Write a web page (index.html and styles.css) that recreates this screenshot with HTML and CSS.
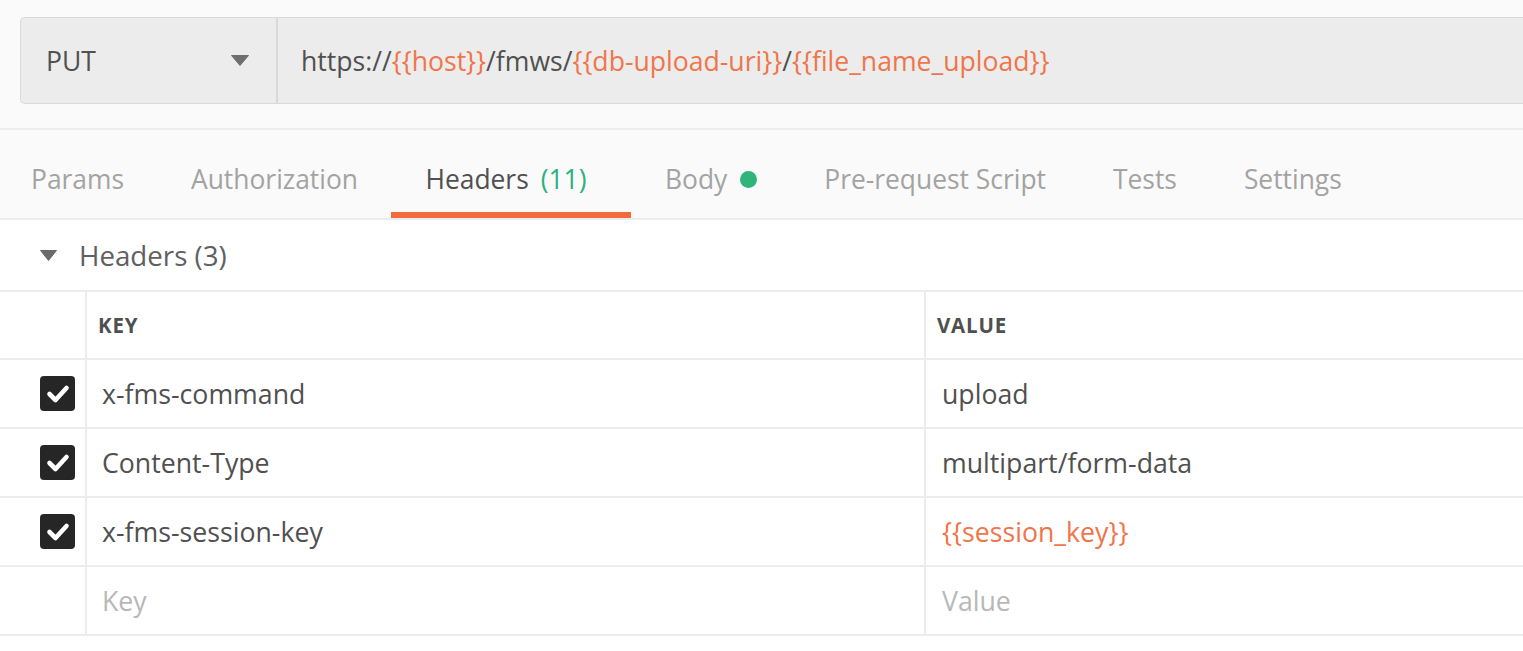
FILE: index.html
```html
<!DOCTYPE html>
<html>
<head>
<meta charset="utf-8">
<link rel="stylesheet" href="styles.css">
</head>
<body>
<div class="top">
  <div class="urlbar">
    <div class="method">
      <span class="method-name">PUT</span>
      <svg class="caret" width="18" height="11" viewBox="0 0 18 11"><path d="M0.5 0.5 L17.5 0.5 L9 10.5 Z" fill="#6e6e6e" stroke="#6e6e6e" stroke-width="1" stroke-linejoin="round"/></svg>
    </div>
    <div class="url">https://<span class="var">{{host}}</span>/fmws/<span class="var">{{db-upload-uri}}</span>/<span class="var">{{file_name_upload}}</span></div>
  </div>
</div>
<div class="tabs">
  <div class="tab">Params</div>
  <div class="tab">Authorization</div>
  <div class="tab active">Headers <span class="count">(11)</span></div>
  <div class="tab">Body <span class="dot"></span></div>
  <div class="tab">Pre-request Script</div>
  <div class="tab">Tests</div>
  <div class="tab">Settings</div>
</div>
<div class="section">
  <svg class="tri" width="17" height="11" viewBox="0 0 17 11"><path d="M0.5 0.5 L16.5 0.5 L8.5 10.5 Z" fill="#6a6a6a" stroke="#6a6a6a" stroke-width="1" stroke-linejoin="round"/></svg>
  <span class="section-title">Headers (3)</span>
</div>
<div class="table">
  <div class="row head">
    <div class="cell chk"></div>
    <div class="cell key">KEY</div>
    <div class="cell val">VALUE</div>
  </div>
  <div class="row">
    <div class="cell chk"><span class="box"><svg width="35" height="35" viewBox="0 0 35 35"><path d="M9.5 18 L15.5 24 L26.5 12" fill="none" stroke="#fff" stroke-width="4.6" stroke-linecap="round" stroke-linejoin="round"/></svg></span></div>
    <div class="cell key">x-fms-command</div>
    <div class="cell val">upload</div>
  </div>
  <div class="row">
    <div class="cell chk"><span class="box"><svg width="35" height="35" viewBox="0 0 35 35"><path d="M9.5 18 L15.5 24 L26.5 12" fill="none" stroke="#fff" stroke-width="4.6" stroke-linecap="round" stroke-linejoin="round"/></svg></span></div>
    <div class="cell key">Content-Type</div>
    <div class="cell val">multipart/form-data</div>
  </div>
  <div class="row">
    <div class="cell chk"><span class="box"><svg width="35" height="35" viewBox="0 0 35 35"><path d="M9.5 18 L15.5 24 L26.5 12" fill="none" stroke="#fff" stroke-width="4.6" stroke-linecap="round" stroke-linejoin="round"/></svg></span></div>
    <div class="cell key">x-fms-session-key</div>
    <div class="cell val var">{{session_key}}</div>
  </div>
  <div class="row">
    <div class="cell chk"></div>
    <div class="cell key ph">Key</div>
    <div class="cell val ph">Value</div>
  </div>
</div>
</body>
</html>
```
FILE: styles.css
```css
* { box-sizing: border-box; }
html, body {
  margin: 0;
  padding: 0;
  background: #ffffff;
  font-family: "Open Sans", "Noto Sans", sans-serif;
  color: #505050;
  overflow: hidden;
}
.top {
  background: #fafafa;
  padding: 17px 0 24px 20px;
  border-bottom: 2px solid #ededed;
}
.urlbar {
  display: flex;
  height: 87px;
  background: #ececec;
  border: 1px solid #d9d9d9;
  border-right: none;
  border-radius: 5px 0 0 5px;
}
.method {
  width: 257px;
  flex: none;
  display: flex;
  align-items: center;
  justify-content: space-between;
  padding: 0 27px 0 25px;
  border-right: 2px solid #d9d9d9;
}
.method-name {
  font-size: 26.5px;
  color: #505050;
}
.url {
  display: flex;
  align-items: center;
  padding-left: 23px;
  font-size: 26.6px;
  color: #505050;
  white-space: nowrap;
}
.var { color: #f0754a; }
.tabs {
  display: flex;
  height: 90px;
  background: #fafafa;
  border-bottom: 2px solid #ececec;
}
.tab {
  display: flex;
  align-items: center;
  padding: 16px 33.5px 0;
  font-size: 26.4px;
  color: #a3a3a3;
  white-space: nowrap;
  border-bottom: 6px solid transparent;
}
.tab:first-child { padding-left: 31px; }
.tab.active {
  color: #505050;
  border-bottom-color: #f26b3a;
  padding-left: 34px;
  padding-right: 45px;
}
.count { color: #2ab27c; margin-left: 12px; }
.dot {
  display: inline-block;
  width: 17px;
  height: 17px;
  border-radius: 50%;
  background: #2fb57a;
  margin-left: 13px;
}
.section {
  display: flex;
  align-items: center;
  height: 72px;
  padding-left: 40px;
  border-bottom: 2px solid #ececec;
}
.tri { margin-right: 22px; }
.section-title {
  font-size: 27.7px;
  color: #606060;
}
.row {
  display: flex;
  height: 69px;
  border-bottom: 2px solid #ececec;
}
.row.head { height: 68px; }
.cell {
  display: flex;
  align-items: center;
  font-size: 26.7px;
  white-space: nowrap;
}
.chk {
  width: 87px;
  flex: none;
  border-right: 2px solid #ececec;
  padding-left: 40px;
}
.key {
  width: 839px;
  flex: none;
  border-right: 2px solid #ececec;
  padding-left: 15px;
}
.val {
  flex: 1;
  padding-left: 16px;
}
.head .cell {
  font-size: 20.5px;
  font-weight: 700;
  color: #505050;
  letter-spacing: 0.8px;
}
.head .key { padding-left: 11px; }
.head .val { padding-left: 11px; }
.box {
  width: 35px;
  height: 35px;
  border-radius: 4px;
  background: #262626;
  display: flex;
}
.ph { color: #b8b8b8; }
```
